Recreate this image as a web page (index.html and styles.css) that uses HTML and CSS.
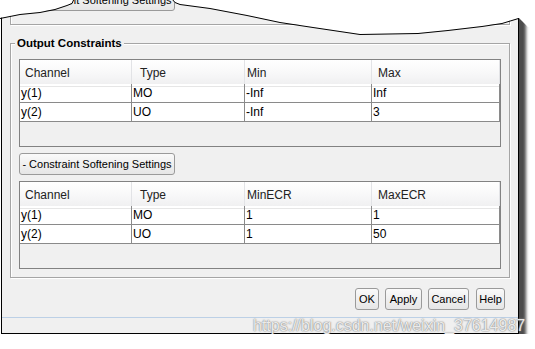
FILE: index.html
```html
<!DOCTYPE html>
<html lang="en">
<head>
    <meta charset="UTF-8">
    <title>Output Constraints</title>
    <link rel="stylesheet" href="styles.css">
</head>
<body>

<div class="window">
    <div class="prev-group">
        <button class="btn btn-toggle">- Constraint Softening Settings</button>
    </div>

    <div class="group">
        <div class="group-title">Output Constraints</div>

        <div class="grid">
            <div class="grid-row grid-head">
                <div class="cell c-channel">Channel</div>
                <div class="cell c-type">Type</div>
                <div class="cell c-min">Min</div>
                <div class="cell c-max">Max</div>
            </div>
            <div class="grid-row">
                <div class="cell">y(1)</div>
                <div class="cell">MO</div>
                <div class="cell">-Inf</div>
                <div class="cell">Inf</div>
            </div>
            <div class="grid-row">
                <div class="cell">y(2)</div>
                <div class="cell">UO</div>
                <div class="cell">-Inf</div>
                <div class="cell">3</div>
            </div>
        </div>

        <button class="btn btn-toggle">- Constraint Softening Settings</button>

        <div class="grid grid-soft">
            <div class="grid-row grid-head">
                <div class="cell c-channel">Channel</div>
                <div class="cell c-type">Type</div>
                <div class="cell c-min">MinECR</div>
                <div class="cell c-max">MaxECR</div>
            </div>
            <div class="grid-row">
                <div class="cell">y(1)</div>
                <div class="cell">MO</div>
                <div class="cell">1</div>
                <div class="cell">1</div>
            </div>
            <div class="grid-row">
                <div class="cell">y(2)</div>
                <div class="cell">UO</div>
                <div class="cell">1</div>
                <div class="cell">50</div>
            </div>
        </div>
    </div>

    <div class="actions">
        <button class="btn btn-ok">OK</button>
        <button class="btn btn-apply">Apply</button>
        <button class="btn btn-cancel">Cancel</button>
        <button class="btn btn-help">Help</button>
    </div>

    <div class="status"></div>

    <!-- torn top edge of the screenshot -->
    <svg class="torn" width="535" height="40" viewBox="0 0 535 40">
        <polygon fill="#fff" points="0,0 0,18 10,16 20,14 40,12 55,9 67,5 72,3 74,-1 172,-1 175,2 180,4 210,8 247,15 280,22 313,27 360,34 418,33 448,30 482,26 502,23 518,18 519,18 528,27 535,27 535,0"/>
        <polyline fill="none" stroke="#000" stroke-width="1" points="0,18.5 10,16.5 20,14.5 40,12.5 55,9.5 67,5.5 72,3.5 74,-1 172,-1 175,2.5 180,4.5 210,8.5 247,15.5 280,22.5 313,27.5 360,34.5 418,33.5 448,30.5 482,26.5 502,23.5 518.5,18.5 518.5,20"/>
    </svg>

    <div class="watermark">https://blog.csdn.net/weixin_37614987</div>
</div>

</body>
</html>
```

FILE: styles.css
```css
body {
    margin: 0;
    background-color: #fff;
    font-family: 'Liberation Sans', Arial, sans-serif;
    font-size: 12px;
    color: #000;
}

.window {
    position: relative;
    box-sizing: border-box;
    width: 518px;
    height: 334px;
    margin-left: 1px;
    border: 1px solid #000;
    border-top: none;
    background-color: #f0f0f0;
    box-shadow: 7px 7px 3px rgba(0, 0, 0, 0.7);
    display: flex;
    flex-direction: column;
}

/* bottom of the group box above, mostly torn away */
.prev-group {
    box-sizing: border-box;
    height: 25px;
    margin: 0 8px;
    border: 1px solid #a5a5a5;
    border-top: none;
    box-shadow: inset 1px 0 0 #fff, 1px 1px 0 #fff;
    display: flex;
    align-items: flex-start;
    padding-left: 8px;
}

.prev-group .btn-toggle {
    margin-top: -11px;
}

.group {
    margin: 18px 8px 0;
    border: 1px solid #a5a5a5;
    box-shadow: inset 1px 1px 0 #fff, 1px 1px 0 #fff;
    padding: 0 8px 8px;
}

.group-title {
    width: fit-content;
    margin: -8px 0 0 -4px;
    padding: 0 2px;
    line-height: 15px;
    font-size: 11.5px;
    font-weight: bold;
    background-color: #f0f0f0;
}

.grid {
    box-sizing: border-box;
    height: 88px;
    margin-top: 8px;
    border: 1px solid #828282;
    background-color: #f0f0f0;
}

.grid-soft {
    margin-top: 6px;
}

.grid-row {
    display: grid;
    grid-template-columns: 112px 113px 127px 1fr;
    height: 19px;
    background-color: #fff;
}

.grid-row .cell {
    padding-left: 1px;
    line-height: 18px;
    border-right: 1px solid #8a8a8a;
    border-bottom: 1px solid #8a8a8a;
    white-space: nowrap;
}

.grid-head {
    height: 24px;
    background: linear-gradient(#fff, #f7f7f8 60%, #f0f0f1);
}

.grid-head .cell {
    line-height: 26px;
    color: #222;
    border-right: 1px solid #e2e3e6;
    border-bottom: 1px solid #e6e6e6;
}

.grid-head .c-channel { padding-left: 5px; }
.grid-head .c-type { padding-left: 8px; }
.grid-head .c-min { padding-left: 2px; }
.grid-head .c-max { padding-left: 6px; }

.btn {
    box-sizing: border-box;
    height: 22px;
    padding: 0;
    border: 1px solid #9a9a9a;
    border-radius: 3px;
    background: linear-gradient(#fafafa, #efefef 50%, #e6e6e6);
    font-family: inherit;
    font-size: 11px;
    color: #000;
    white-space: nowrap;
}

.btn-toggle {
    align-self: flex-start;
    display: block;
    width: 156px;
    margin-top: 6px;
}

.actions {
    display: flex;
    justify-content: flex-end;
    gap: 6px;
    margin-top: 10px;
    padding-right: 13px;
}

.btn-ok { width: 24px; }
.btn-apply { width: 37px; }
.btn-cancel { width: 41px; }
.btn-help { width: 29px; margin-left: 1px; }

.status {
    margin-top: 7px;
    border-top: 1px solid #bcd0e6;
    flex: 1;
}

.torn {
    position: absolute;
    top: 0;
    left: -2px;
    display: block;
}

.watermark {
    position: absolute;
    left: 251px;
    top: 317px;
    font-size: 16px;
    line-height: 18px;
    color: rgba(255, 255, 255, 0.85);
    text-shadow: 0 0 1px #777, 0 0 2px #999;
    white-space: nowrap;
}
```
